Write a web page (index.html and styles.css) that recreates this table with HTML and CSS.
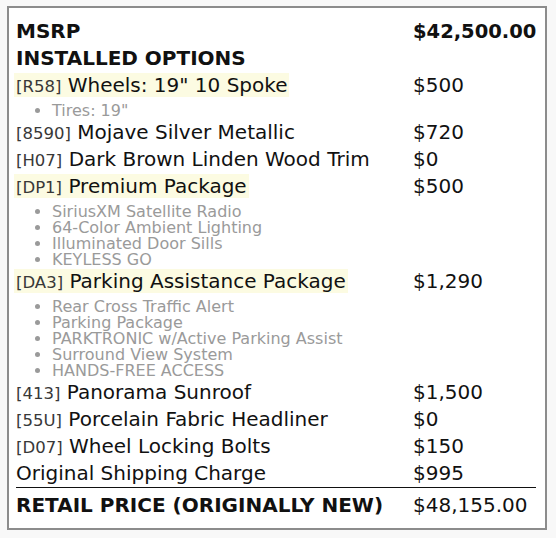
FILE: index.html
```html
<!DOCTYPE html>
<html lang="en">
<head>
    <meta charset="UTF-8">
    <meta name="viewport" content="width=device-width, initial-scale=1.0">
    <title>Window Sticker</title>
    <link rel="stylesheet" href="styles.css">
</head>
<body>

<div class="sticker">
    <table class="price-list">
        <colgroup>
            <col>
            <col class="price-col">
        </colgroup>
        <tr class="head">
            <td>MSRP</td>
            <td class="price">$42,500.00</td>
        </tr>
        <tr class="head">
            <td colspan="2">INSTALLED OPTIONS</td>
        </tr>
        <tr class="option">
            <td><span class="mark"><span class="code">[R58]</span> Wheels: 19" 10 Spoke</span></td>
            <td class="price">$500</td>
        </tr>
        <tr class="details">
            <td colspan="2">
                <ul>
                    <li>Tires: 19"</li>
                </ul>
            </td>
        </tr>
        <tr class="option">
            <td><span class="code">[8590]</span> Mojave Silver Metallic</td>
            <td class="price">$720</td>
        </tr>
        <tr class="option">
            <td><span class="code">[H07]</span> Dark Brown Linden Wood Trim</td>
            <td class="price">$0</td>
        </tr>
        <tr class="option">
            <td><span class="mark"><span class="code">[DP1]</span> Premium Package</span></td>
            <td class="price">$500</td>
        </tr>
        <tr class="details">
            <td colspan="2">
                <ul>
                    <li>SiriusXM Satellite Radio</li>
                    <li>64-Color Ambient Lighting</li>
                    <li>Illuminated Door Sills</li>
                    <li>KEYLESS GO</li>
                </ul>
            </td>
        </tr>
        <tr class="option">
            <td><span class="mark"><span class="code">[DA3]</span> Parking Assistance Package</span></td>
            <td class="price">$1,290</td>
        </tr>
        <tr class="details">
            <td colspan="2">
                <ul>
                    <li>Rear Cross Traffic Alert</li>
                    <li>Parking Package</li>
                    <li>PARKTRONIC w/Active Parking Assist</li>
                    <li>Surround View System</li>
                    <li>HANDS-FREE ACCESS</li>
                </ul>
            </td>
        </tr>
        <tr class="option">
            <td><span class="code">[413]</span> Panorama Sunroof</td>
            <td class="price">$1,500</td>
        </tr>
        <tr class="option">
            <td><span class="code">[55U]</span> Porcelain Fabric Headliner</td>
            <td class="price">$0</td>
        </tr>
        <tr class="option">
            <td><span class="code">[D07]</span> Wheel Locking Bolts</td>
            <td class="price">$150</td>
        </tr>
        <tr class="option">
            <td>Original Shipping Charge</td>
            <td class="price">$995</td>
        </tr>
        <tr class="total">
            <td>RETAIL PRICE (ORIGINALLY NEW)</td>
            <td class="price">$48,155.00</td>
        </tr>
    </table>
</div>

</body>
</html>
```

FILE: styles.css
```css
body {
    font-family: "DejaVu Sans", sans-serif;
    background-color: #f8f8f8;
    color: #111;
    margin: 0;
    padding: 6px 0 0 7px;
}
.sticker {
    width: 520px;
    background-color: #fff;
    border: 2px solid #8c8c8c;
    padding: 10px 9px 9px 7px;
}
.price-list {
    width: 100%;
    border-collapse: collapse;
    table-layout: fixed;
}
.price-col {
    width: 123px;
}
.price-list td {
    padding: 0;
    font-size: 20px;
    line-height: 27px;
    vertical-align: top;
}
.price-list .price {
    white-space: nowrap;
}
.head td {
    font-weight: bold;
}
.head .price {
    font-size: 19.5px;
}
.code {
    font-size: 16.5px;
    line-height: 1;
    color: #383838;
}
.mark {
    background-color: #fcfbe2;
    margin-left: -2px;
    padding: 0 2px;
}
.details ul {
    margin: 4px 0 0;
    padding-left: 36px;
    color: #9a9a9a;
    font-size: 16px;
    line-height: 16px;
}
.total td {
    font-weight: bold;
    border-top: 1px solid #111;
    padding-top: 4px;
}
.total .price {
    font-weight: normal;
}
```
